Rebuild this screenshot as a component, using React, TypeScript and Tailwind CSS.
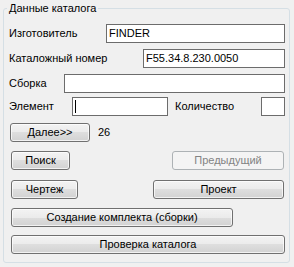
import React from 'react';

const btn =
  'flex h-[19px] items-center justify-center rounded-[3px] border border-[#707070] bg-[linear-gradient(#f3f3f3,#ebebeb_50%,#dedede_50%,#d2d2d2)] text-[11px] leading-none text-black shadow-[inset_0_0_0_1px_rgba(255,255,255,0.7)]';

const field = 'h-[19px] border border-[#6c6c6c] bg-white px-[2px] text-[11px] leading-[17px] text-black';

export default function App() {
  return (
    <div className="relative h-[267px] w-[294px] overflow-hidden bg-[#f0f0f0] pl-[3px] pt-[8px] font-['Liberation_Sans',Arial,sans-serif] text-[11px] text-black">
      {/* Group box */}
      <div className="relative h-[255px] w-[287px] rounded-[3px] border border-[#d5dfe5] pl-[5px] pr-[4px] pt-[15px]">
        <span className="absolute left-[3px] top-[-7px] bg-[#f0f0f0] px-[2px] text-[11px] leading-[13px]">
          Данные каталога
        </span>

        {/* Изготовитель */}
        <div className="flex items-center justify-between">
          <span>Изготовитель</span>
          <div className={`${field} w-[179px]`}>FINDER</div>
        </div>

        {/* Каталожный номер */}
        <div className="mt-[6px] flex items-center justify-between">
          <span>Каталожный номер</span>
          <div className={`${field} w-[142px]`}>F55.34.8.230.0050</div>
        </div>

        {/* Сборка */}
        <div className="mt-[6px] flex items-center justify-between">
          <span>Сборка</span>
          <div className={`${field} w-[221px]`} />
        </div>

        {/* Элемент / Количество */}
        <div className="mt-[4px] flex items-center">
          <span className="w-[63px]">Элемент</span>
          <div className={`${field} relative w-[96px]`}>
            <span className="absolute left-[2px] top-[2px] h-[13px] w-px bg-black" />
          </div>
          <span className="ml-[7px]">Количество</span>
          <div className={`${field} ml-auto w-[24px]`} />
        </div>

        {/* Далее */}
        <div className="mt-[7px] flex items-center">
          <button className={`${btn} ml-[1px] w-[80px]`}>Далее&gt;&gt;</button>
          <span className="ml-[8px]">26</span>
        </div>

        {/* Поиск / Предыдущий */}
        <div className="mt-[9px] flex items-center">
          <button className={`${btn} ml-[2px] w-[59px]`}>Поиск</button>
          <button className="ml-auto mr-[1px] flex h-[19px] w-[112px] items-center justify-center rounded-[3px] border border-[#adb2b5] bg-[#f4f4f4] text-[11px] leading-none text-[#838383]">
            Предыдущий
          </button>
        </div>

        {/* Чертеж / Проект */}
        <div className="mt-[10px] flex items-center">
          <button className={`${btn} ml-[2px] w-[67px]`}>Чертеж</button>
          <button className={`${btn} ml-auto mr-[1px] w-[131px]`}>Проект</button>
        </div>

        {/* Создание комплекта */}
        <div className="mt-[9px] flex">
          <button className={`${btn} ml-[2px] w-[222px]`}>Создание комплекта (сборки)</button>
        </div>

        {/* Проверка каталога */}
        <div className="mt-[8px] flex">
          <button className={`${btn} ml-[2px] w-[274px]`}>Проверка каталога</button>
        </div>
      </div>
    </div>
  );
}
